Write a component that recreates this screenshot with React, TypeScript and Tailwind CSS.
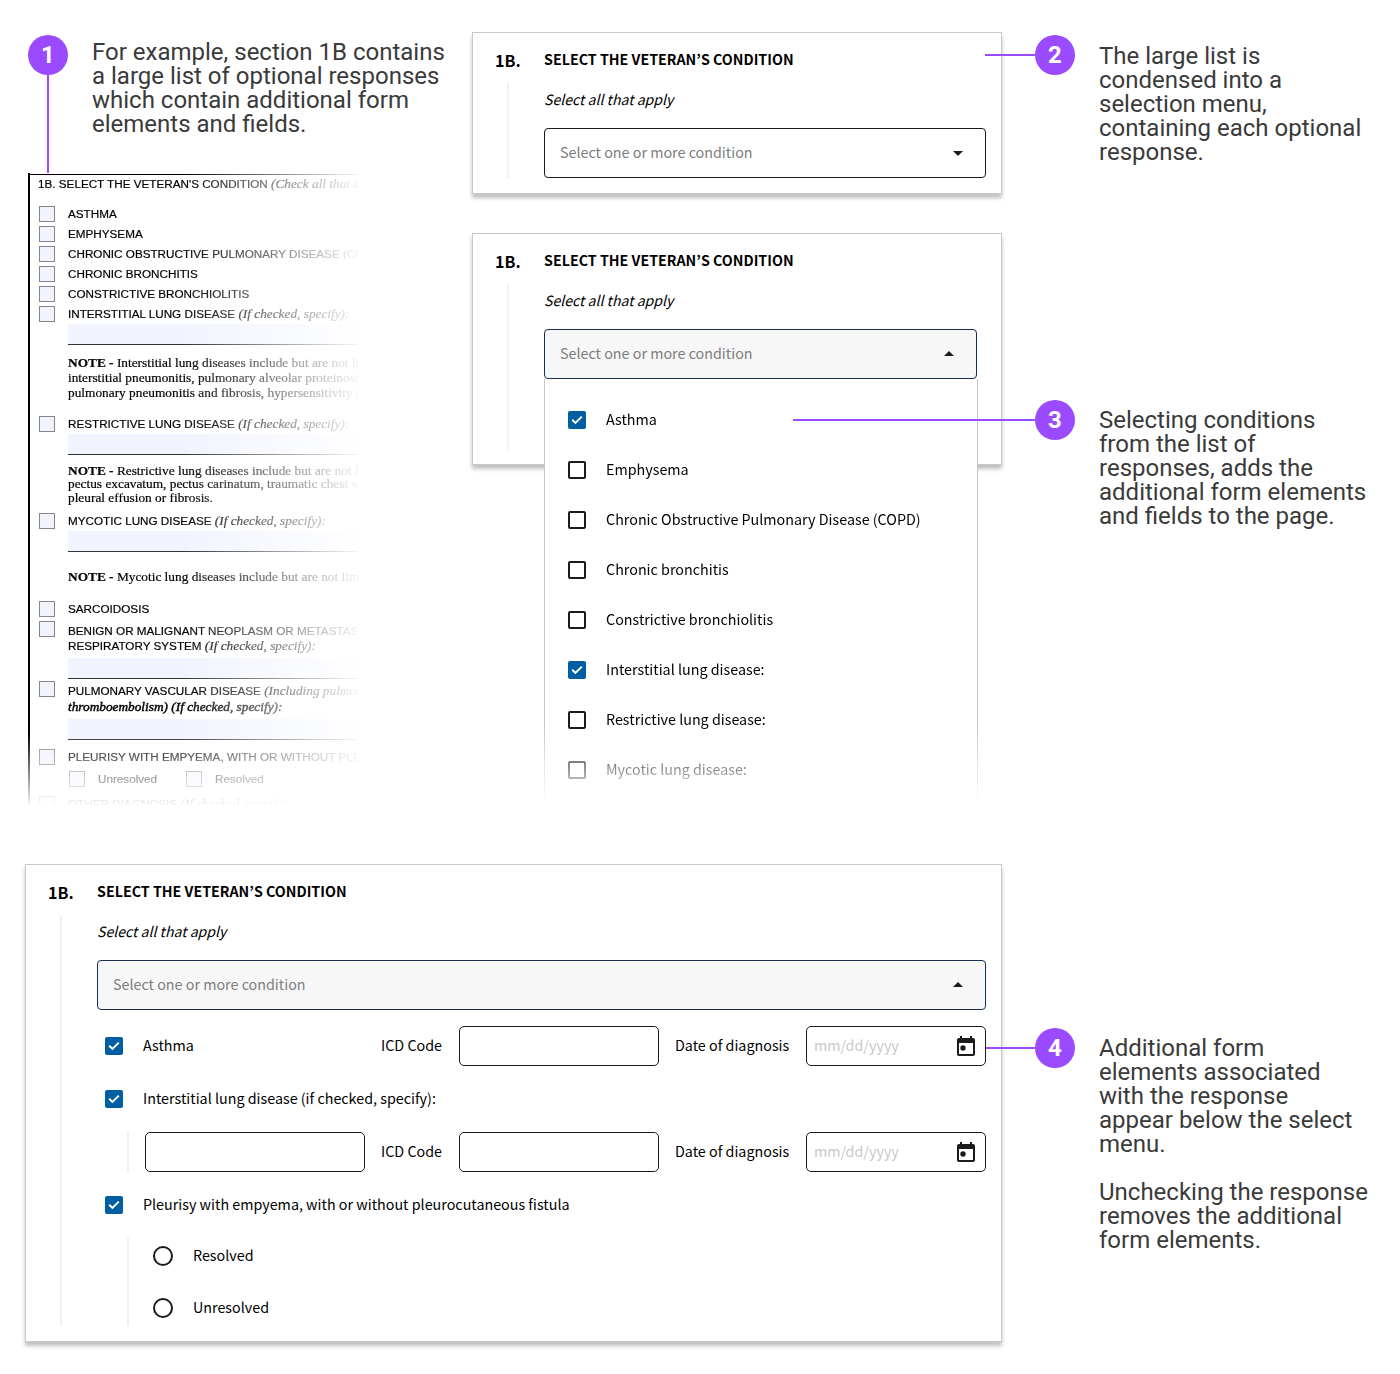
import type { ReactNode } from "react";
import clsx from "clsx";

/* ---------- annotations ---------- */

function Badge({ n }: { n: number }) {
  return (
    <div className="flex size-10 shrink-0 items-center justify-center rounded-full bg-[#9b4bff] font-[Roboto,sans-serif] text-2xl leading-6 font-bold text-white">
      {n}
    </div>
  );
}

function Note({ lines, className }: { lines: string[]; className?: string }) {
  return (
    <p className={clsx("font-[Roboto,sans-serif] text-2xl leading-6 whitespace-nowrap text-[#3a3a3a]", className)}>
      {lines.map((line, i) => (
        <span key={i} className="block h-6">
          {line}
        </span>
      ))}
    </p>
  );
}

function Callout({
  n,
  lines,
  className,
  connector,
  noteClass,
}: {
  n: number;
  lines: string[];
  className: string;
  connector: string;
  noteClass: string;
}) {
  return (
    <div className={clsx("z-10 flex items-start", className)}>
      <div className={clsx("mt-[19px] h-0.5 shrink-0 bg-[#9b4bff]", connector)} />
      <Badge n={n} />
      <Note lines={lines} className={clsx("ml-6", noteClass)} />
    </div>
  );
}

/* ---------- paper form ---------- */

function PaperBox() {
  return <span className="size-4 shrink-0 border border-[#85858d] bg-[#f1f4fe]" />;
}

function PaperRow({ children, className }: { children: ReactNode; className: string }) {
  return (
    <div className={clsx("flex h-4 items-center gap-[13px]", className)}>
      <PaperBox />
      <span className="leading-4">{children}</span>
    </div>
  );
}

function Aside({ children }: { children: ReactNode }) {
  return <i className="font-[Liberation_Serif,serif] text-[13.3px]">{children}</i>;
}

function PaperField({ className }: { className: string }) {
  return <div className={clsx("ml-[29px] h-[21px] border-b border-[#333] bg-[#f1f4fe]", className)} />;
}

function PaperNote({ children, className }: { children: ReactNode; className: string }) {
  return <div className={clsx("ml-[29px] font-[Liberation_Serif,serif] text-[13.33px]", className)}>{children}</div>;
}

function PaperForm() {
  return (
    <div className="ml-7 h-[632px] w-[330px] overflow-hidden border-l-2 border-black font-[Liberation_Sans,sans-serif] text-[11.7px] whitespace-nowrap text-black [-webkit-text-stroke:0.2px_black] [mask-composite:intersect] [mask-image:linear-gradient(to_right,black_155px,transparent_338px),linear-gradient(to_bottom,black_560px,transparent_635px)]">
      <div className="mt-px border-t border-black pl-[9px]">
        <div className="-ml-px h-4 pt-px leading-4">
          1B. SELECT THE VETERAN'S CONDITION <Aside>(Check all that apply)</Aside>
        </div>
        <PaperRow className="mt-[15px]">ASTHMA</PaperRow>
        <PaperRow className="mt-1">EMPHYSEMA</PaperRow>
        <PaperRow className="mt-1">CHRONIC OBSTRUCTIVE PULMONARY DISEASE (COPD)</PaperRow>
        <PaperRow className="mt-1">CHRONIC BRONCHITIS</PaperRow>
        <PaperRow className="mt-1">CONSTRICTIVE BRONCHIOLITIS</PaperRow>
        <PaperRow className="mt-1">
          INTERSTITIAL LUNG DISEASE <Aside>(If checked, specify):</Aside>
        </PaperRow>
        <PaperField className="mt-0.5" />
        <PaperNote className="mt-2.5 h-[46px] leading-[15px]">
          <b>NOTE - </b>Interstitial lung diseases include but are not limited to
          <br />
          interstitial pneumonitis, pulmonary alveolar proteinosis,
          <br />
          pulmonary pneumonitis and fibrosis, hypersensitivity pn
        </PaperNote>
        <PaperRow className="mt-[15px]">
          RESTRICTIVE LUNG DISEASE <Aside>(If checked, specify):</Aside>
        </PaperRow>
        <PaperField className="mt-0.5" />
        <PaperNote className="mt-[9px] h-10 leading-[13.33px]">
          <b>NOTE - </b>Restrictive lung diseases include but are not limited
          <br />
          pectus excavatum, pectus carinatum, traumatic chest wall
          <br />
          pleural effusion or fibrosis.
        </PaperNote>
        <PaperRow className="mt-[9px]">
          MYCOTIC LUNG DISEASE <Aside>(If checked, specify):</Aside>
        </PaperRow>
        <PaperField className="mt-0.5" />
        <PaperNote className="mt-[17px] leading-4">
          <b>NOTE - </b>Mycotic lung diseases include but are not limited to
        </PaperNote>
        <PaperRow className="mt-4">SARCOIDOSIS</PaperRow>
        <div className="mt-1 flex h-[37px] items-start gap-[13px]">
          <PaperBox />
          <span className="pt-0.5 leading-[15px]">
            BENIGN OR MALIGNANT NEOPLASM OR METASTASES
            <br />
            RESPIRATORY SYSTEM <Aside>(If checked, specify):</Aside>
          </span>
        </div>
        <PaperField className="" />
        <div className="mt-0.5 flex h-[38px] items-start gap-[13px]">
          <PaperBox />
          <span className="pt-0.5 leading-4">
            PULMONARY VASCULAR DISEASE <Aside>(Including pulmonary</Aside>
            <br />
            <span className="[-webkit-text-stroke:0.45px_black]">
              <Aside>thromboembolism) (If checked, specify):</Aside>
            </span>
          </span>
        </div>
        <PaperField className="" />
        <PaperRow className="mt-[9px]">PLEURISY WITH EMPYEMA, WITH OR WITHOUT PLEURO</PaperRow>
        <div className="mt-1.5 flex h-4 items-center pl-[30px] leading-4">
          <PaperBox />
          <span className="ml-[13px] w-[88px]">Unresolved</span>
          <PaperBox />
          <span className="ml-[13px]">Resolved</span>
        </div>
        <PaperRow className="mt-[9px]">
          OTHER DIAGNOSIS <Aside>(If checked, specify):</Aside>
        </PaperRow>
      </div>
    </div>
  );
}

/* ---------- digital form ---------- */

function Card({ children, className }: { children: ReactNode; className: string }) {
  return (
    <div
      className={clsx(
        "flex shrink-0 border border-[#c9c9c9] bg-white pt-[15px] pr-[15px] pb-[15px] pl-[22px] font-[Noto_Sans_CJK_KR,sans-serif] text-[14.32px] leading-6 text-black shadow-[0_4px_4px_rgba(0,0,0,0.25)]",
        className,
      )}
    >
      <div className="flex w-[49px] shrink-0 flex-col">
        <b className="h-6 text-[16.1px]">1B.</b>
        <div className="mt-[11px] ml-3 w-0.5 flex-1 bg-[#f0f0f0]" />
      </div>
      <div className="min-w-0 flex-1">
        <h2 className="-mt-px h-6 text-[14.25px] font-bold">SELECT THE VETERAN’S CONDITION</h2>
        <p className="mt-4 h-6 text-[14.1px] italic">Select all that apply</p>
        {children}
      </div>
    </div>
  );
}

function SelectBox({ open, className }: { open?: boolean; className?: string }) {
  return (
    <div
      className={clsx(
        "mt-[17px] flex h-[50px] items-center justify-between rounded border pr-[22px] pl-[15px]",
        open ? "border-[#162e51] bg-[#f7f7f7]" : "border-[#1b1b1b] bg-white",
        className,
      )}
    >
      <span className="-mt-0.5 text-[#7d7d7d]">Select one or more condition</span>
      <svg viewBox="0 0 10 5" className={clsx("h-[5px] w-2.5 fill-[#1b1b1b]", open && "-mt-0.5")}>
        <path d={open ? "M0 5 5 0l5 5z" : "M0 0l5 5 5-5z"} />
      </svg>
    </div>
  );
}

function Check({ label, checked }: { label: string; checked?: boolean }) {
  return (
    <div className="flex items-center gap-5">
      {checked ? (
        <svg viewBox="0 0 18 18" className="size-[18px] shrink-0 rounded-[2px] bg-[#005ea2]">
          <path d="M4.2 8.8l3.2 3.1 6.4-6.3" fill="none" stroke="white" strokeWidth="2" />
        </svg>
      ) : (
        <span className="size-[18px] shrink-0 rounded-[2px] border-2 border-[#1b1b1b]" />
      )}
      <span className="-mt-0.5 whitespace-nowrap">{label}</span>
    </div>
  );
}

function Input({ className, children }: { className: string; children?: ReactNode }) {
  return (
    <div className={clsx("flex h-10 items-center justify-between rounded-[5px] border border-[#1b1b1b]", className)}>
      {children}
    </div>
  );
}

function DiagnosisFields() {
  return (
    <div className="ml-auto flex items-center">
      <span className="-mt-0.5 w-[78px]">ICD Code</span>
      <Input className="w-[200px]" />
      <span className="-mt-0.5 ml-4 w-[131px]">Date of diagnosis</span>
      <Input className="w-[180px] pr-[7px] pl-[7px]">
        <span className="-mt-0.5 text-[#c9c9c9]">mm/dd/yyyy</span>
        <svg viewBox="0 0 24 24" className="mt-px size-6 fill-[#1b1b1b]">
          <path d="M19 3h-1V1h-2v2H8V1H6v2H5c-1.11 0-1.99.9-1.99 2L3 19c0 1.1.89 2 2 2h14c1.1 0 2-.9 2-2V5c0-1.1-.9-2-2-2zm0 16H5V8h14v11z" />
          <circle cx="9" cy="13" r="2.7" />
        </svg>
      </Input>
    </div>
  );
}

function Radio({ label }: { label: string }) {
  return (
    <div className="flex h-9 items-center gap-5">
      <span className="size-5 rounded-full border-2 border-[#1b1b1b]" />
      <span className="-mt-0.5">{label}</span>
    </div>
  );
}

const menu: { label: string; checked?: boolean }[] = [
  { label: "Asthma", checked: true },
  { label: "Emphysema" },
  { label: "Chronic Obstructive Pulmonary Disease (COPD)" },
  { label: "Chronic bronchitis" },
  { label: "Constrictive bronchiolitis" },
  { label: "Interstitial lung disease:", checked: true },
  { label: "Restrictive lung disease:" },
  { label: "Mycotic lung disease:" },
];

export default function App() {
  return (
    <main className="h-[1374px] w-[1400px] overflow-hidden bg-white pt-8">
      <section className="flex h-[832px]">
        <div className="w-[472px] shrink-0 pt-[3px]">
          <div className="flex h-[138px] items-stretch pl-7">
            <div className="flex flex-col items-center">
              <Badge n={1} />
              <div className="w-0.5 flex-1 bg-[#9b4bff]" />
            </div>
            <Note
              className="mt-[5px] ml-6"
              lines={[
                "For example, section 1B contains",
                "a large list of optional responses",
                "which contain additional form",
                "elements and fields.",
              ]}
            />
          </div>
          <PaperForm />
        </div>

        <div className="flex flex-col gap-[39px]">
          <div className="flex h-[162px] items-start">
            <Card className="h-full w-[530px]">
              <SelectBox />
            </Card>
            <Callout
              n={2}
              className="-ml-[17px] pt-[3px]"
              connector="w-[50px]"
              noteClass="mt-[9px]"
              lines={["The large list is", "condensed into a", "selection menu,", "containing each optional", "response."]}
            />
          </div>

          <div className="flex h-[232px] items-start">
            <Card className="h-full w-[530px]">
              <div className="relative w-[434px]">
                <SelectBox open className="w-[433px]" />
                <div className="absolute top-full left-0 flex h-[425px] w-full flex-col gap-8 border-x border-[#c9c9c9] bg-white pt-8 pl-[23px] [mask-image:linear-gradient(to_bottom,black_350px,transparent_424px)]">
                  {menu.map((item) => (
                    <div key={item.label} className="flex h-[18px] items-center">
                      <Check {...item} />
                    </div>
                  ))}
                </div>
              </div>
            </Card>
            <Callout
              n={3}
              className="-ml-[209px] pt-[167px]"
              connector="w-[242px]"
              noteClass="mt-2"
              lines={[
                "Selecting conditions",
                "from the list of",
                "responses, adds the",
                "additional form elements",
                "and fields to the page.",
              ]}
            />
          </div>
        </div>
      </section>

      <section className="flex h-[478px] items-start pl-[25px]">
        <Card className="h-full w-[977px]">
          <SelectBox open />
          <div className="mt-4 flex h-10 items-center pl-2">
            <Check label="Asthma" checked />
            <DiagnosisFields />
          </div>
          <div className="mt-[21px] flex h-6 items-center pl-2">
            <Check label="Interstitial lung disease (if checked, specify):" checked />
          </div>
          <div className="mt-[21px] ml-[30px] flex h-10 items-center border-l-2 border-[#f0f0f0] pl-4">
            <Input className="w-[220px]" />
            <DiagnosisFields />
          </div>
          <div className="mt-[21px] flex h-6 items-center pl-2">
            <Check label="Pleurisy with empyema, with or without pleurocutaneous fistula" checked />
          </div>
          <div className="mt-[21px] ml-[30px] flex flex-col gap-4 border-l-2 border-[#f0f0f0] pl-6">
            <Radio label="Resolved" />
            <Radio label="Unresolved" />
          </div>
        </Card>
        <Callout
          n={4}
          className="-ml-4 pt-[164px]"
          connector="w-[49px]"
          noteClass="mt-2"
          lines={[
            "Additional form",
            "elements associated",
            "with the response",
            "appear below the select",
            "menu.",
            "",
            "Unchecking the response",
            "removes the additional",
            "form elements.",
          ]}
        />
      </section>
    </main>
  );
}
